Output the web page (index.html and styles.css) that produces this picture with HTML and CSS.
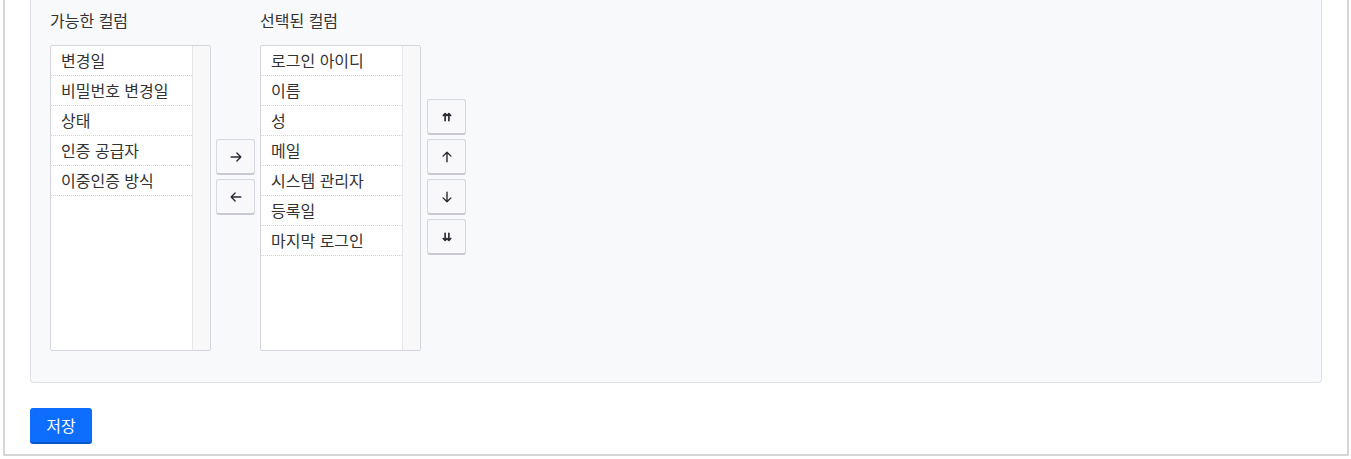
FILE: index.html
```html
<!DOCTYPE html>
<html lang="ko">
<head>
    <meta charset="UTF-8">
    <title>컬럼 설정</title>
    <link rel="stylesheet" href="styles.css">
</head>
<body>

<div class="frame">
    <div class="panel">
        <div class="picker">
            <div class="col">
                <div class="col-label">가능한 컬럼</div>
                <div class="listbox">
                    <ul class="items">
                        <li>변경일</li>
                        <li>비밀번호 변경일</li>
                        <li>상태</li>
                        <li>인증 공급자</li>
                        <li>이중인증 방식</li>
                    </ul>
                    <div class="scroll"></div>
                </div>
            </div>

            <div class="moves moves-transfer">
                <button class="btn-small" title="추가">
                    <svg viewBox="0 0 16 16"><path d="M2.5 8h11M9 3.5L13.5 8 9 12.5"/></svg>
                </button>
                <button class="btn-small" title="제거">
                    <svg viewBox="0 0 16 16"><path d="M13.5 8h-11M7 3.5L2.5 8 7 12.5"/></svg>
                </button>
            </div>

            <div class="col">
                <div class="col-label">선택된 컬럼</div>
                <div class="listbox">
                    <ul class="items">
                        <li>로그인 아이디</li>
                        <li>이름</li>
                        <li>성</li>
                        <li>메일</li>
                        <li>시스템 관리자</li>
                        <li>등록일</li>
                        <li>마지막 로그인</li>
                    </ul>
                    <div class="scroll"></div>
                </div>
            </div>

            <div class="moves moves-order">
                <button class="btn-small" title="맨 위로">
                    <svg viewBox="0 0 16 16" class="dbl"><path d="M5.5 13V3.5M10.5 13V3.5M3 6L5.5 3.5 8 6M8 6l2.5-2.5L13 6"/></svg>
                </button>
                <button class="btn-small" title="위로">
                    <svg viewBox="0 0 16 16"><path d="M8 13.5v-11M3.5 7L8 2.5 12.5 7"/></svg>
                </button>
                <button class="btn-small" title="아래로">
                    <svg viewBox="0 0 16 16"><path d="M8 2.5v11M3.5 9L8 13.5 12.5 9"/></svg>
                </button>
                <button class="btn-small" title="맨 아래로">
                    <svg viewBox="0 0 16 16" class="dbl"><path d="M5.5 3v9.5M10.5 3v9.5M3 10l2.5 2.5L8 10M8 10l2.5 2.5L13 10"/></svg>
                </button>
            </div>
        </div>
    </div>

    <div class="actions">
        <button class="btn-save">저장</button>
    </div>
</div>

</body>
</html>
```

FILE: styles.css
```css
body{
    margin: 0;
    background-color: #fff;
    font-family: "Noto Sans CJK KR", "Noto Sans", sans-serif;
    color: #333;
}

.frame{
    width: 1346px;
    margin-left: 3px;
    border: 2px solid #d6d6d6;
    border-top: none;
    padding: 0 25px 10px 25px;
    box-sizing: border-box;
}

.panel{
    background-color: #f8f9fb;
    border: 1px solid #dfe1ea;
    border-top: none;
    border-radius: 0 0 4px 4px;
    padding: 8px 19px 31px 19px;
}

.picker{
    display: flex;
    align-items: flex-start;
}

.col-label{
    font-size: 16px;
    line-height: 24px;
    margin-bottom: 13px;
}

.listbox{
    display: flex;
    width: 161px;
    height: 306px;
    box-sizing: border-box;
    border: 1px solid #d3d5df;
    border-radius: 2px;
    background-color: #fff;
}

.items{
    list-style: none;
    margin: 0;
    padding: 0;
    flex: 1;
}

.items li{
    height: 30px;
    box-sizing: border-box;
    line-height: 28px;
    padding-left: 10px;
    font-size: 16px;
    border-bottom: 1px dotted #cfd1d8;
    white-space: nowrap;
}

.scroll{
    width: 17px;
    background-color: #f8f8f9;
    border-left: 1px solid #e6e7ec;
}

.moves{
    display: flex;
    flex-direction: column;
    gap: 4px;
    margin: 0 5px 0 5px;
}

.moves-transfer{
    margin-top: 131px;
}

.moves-order{
    margin-top: 91px;
    margin-left: 6px;
}

.btn-small{
    display: flex;
    align-items: center;
    justify-content: center;
    width: 39px;
    height: 36px;
    box-sizing: border-box;
    padding: 0;
    background-color: #f8f8fa;
    border: 1px solid #d6d7e0;
    border-bottom: 2px solid #c8c9d3;
    border-radius: 3px;
}

.btn-small svg{
    width: 14px;
    height: 14px;
    fill: none;
    stroke: #2a2a33;
    stroke-width: 1.6;
    stroke-linecap: round;
    stroke-linejoin: round;
}

.btn-small svg.dbl{
    width: 12px;
    height: 12px;
    stroke-width: 2.2;
}

.actions{
    padding-top: 25px;
}

.btn-save{
    width: 62px;
    height: 36px;
    background-color: #0d6efd;
    border: none;
    border-bottom: 2px solid #0957c9;
    border-radius: 3px;
    color: #fff;
    font-family: "Noto Sans CJK KR", "Noto Sans", sans-serif;
    font-size: 16px;
    padding: 0;
}
```
